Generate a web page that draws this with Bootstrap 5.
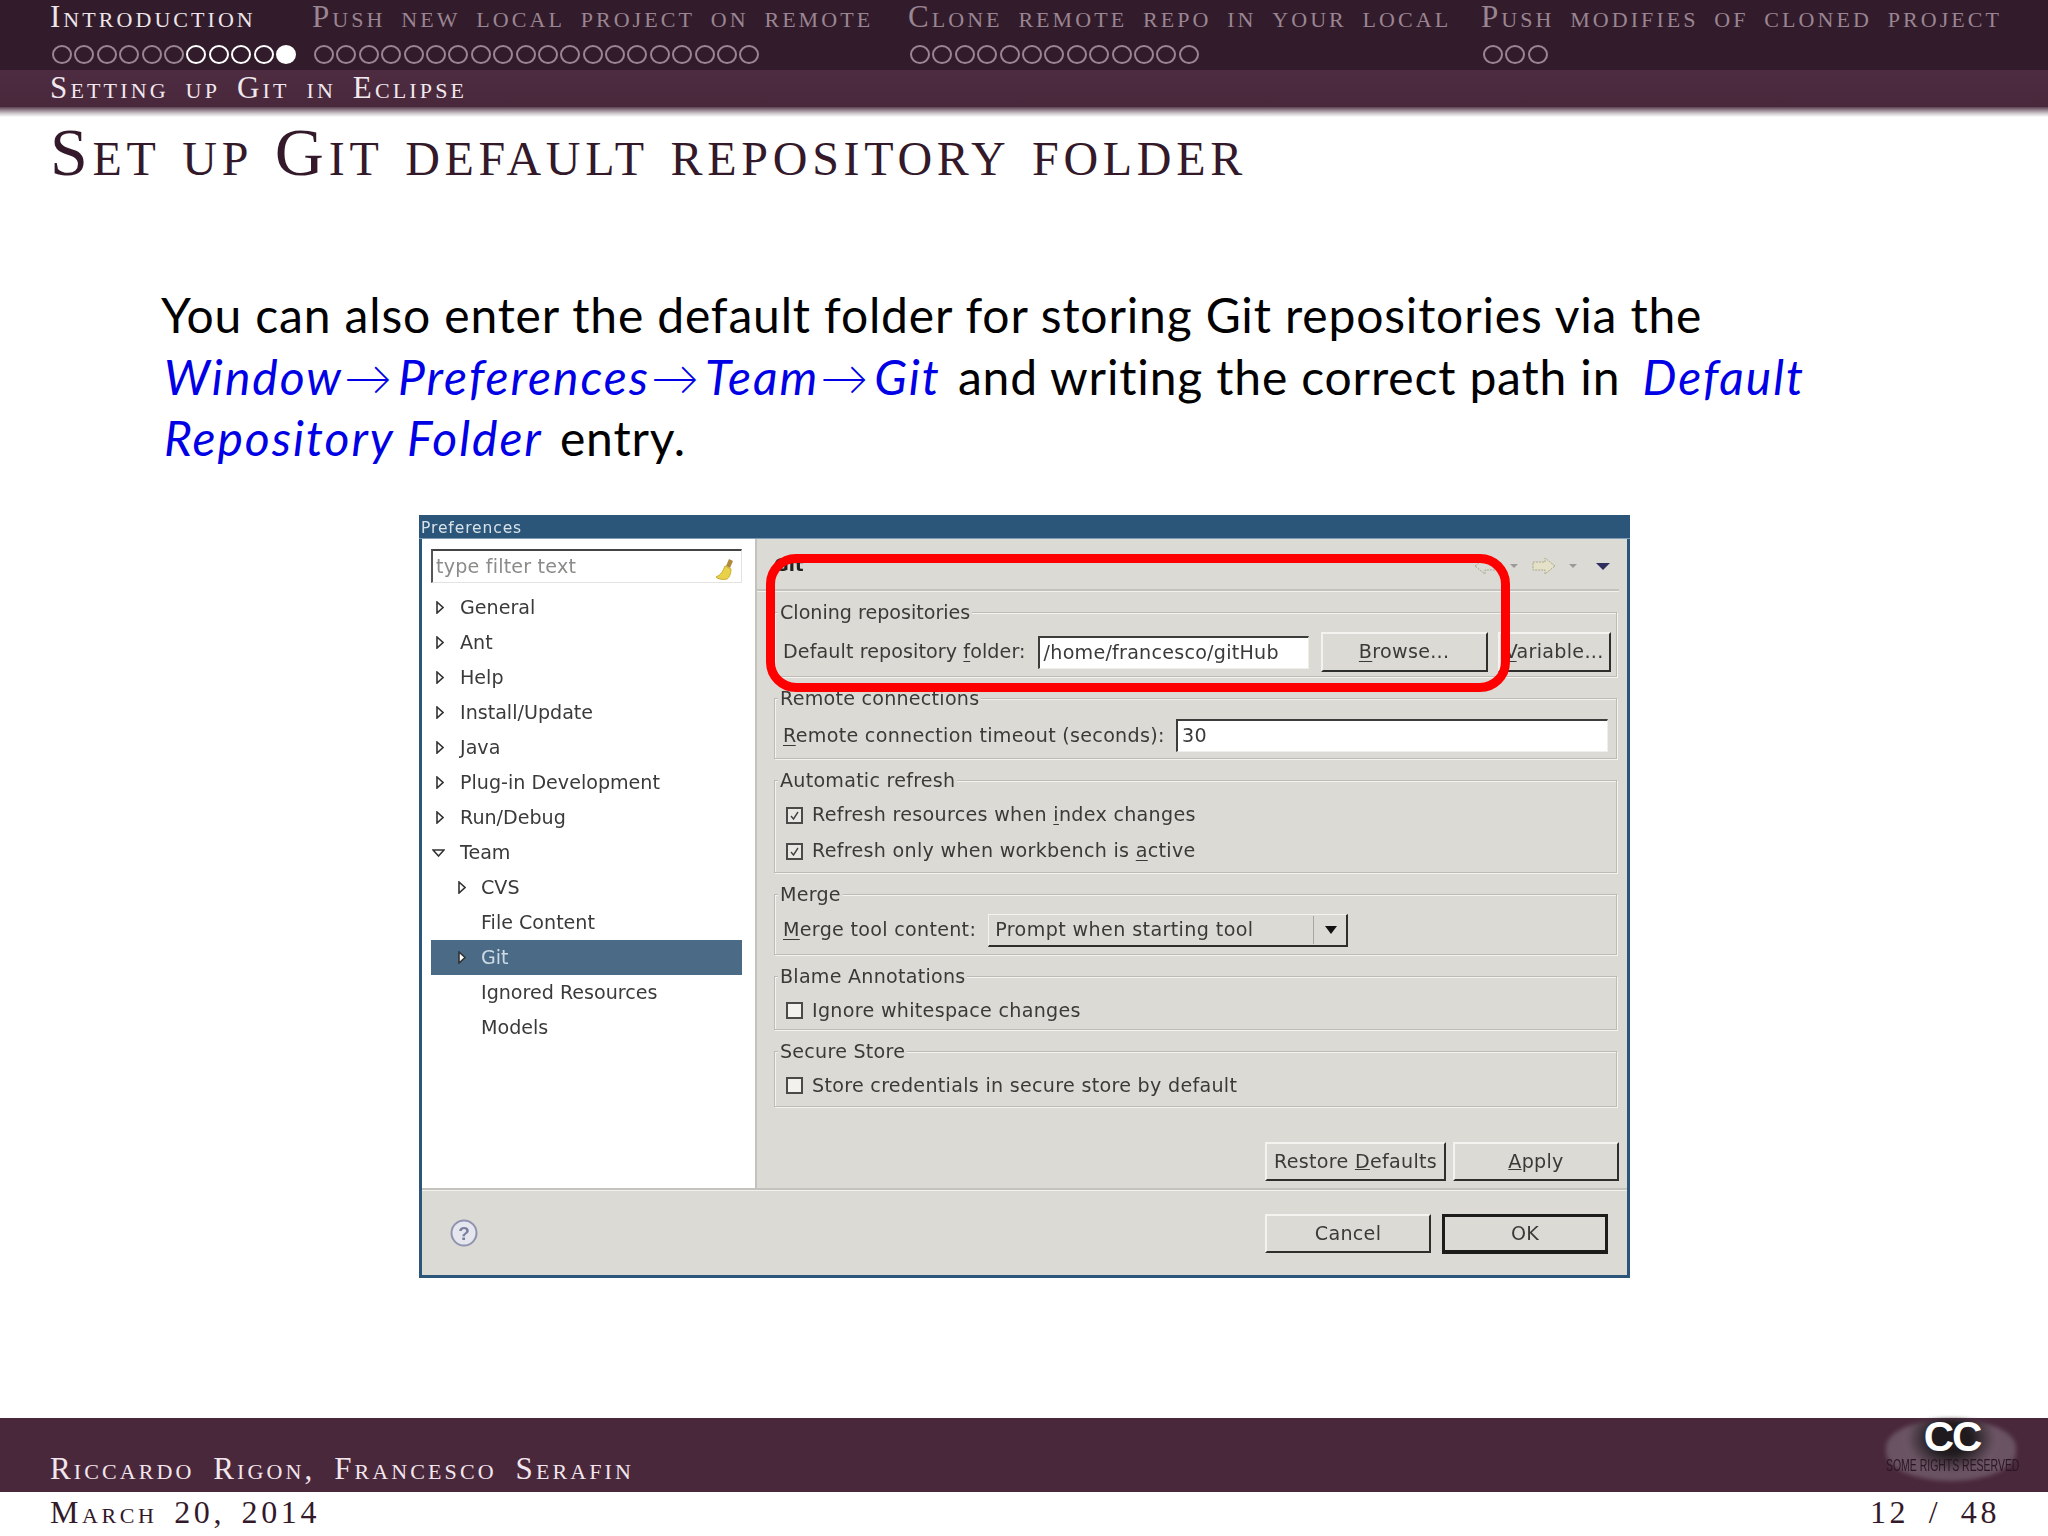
<!DOCTYPE html>
<html lang="en"><head><meta charset="utf-8"><title>Set up Git default repository folder</title>
<link rel="stylesheet" href="https://cdn.jsdelivr.net/npm/bootstrap@5.3.0/dist/css/bootstrap.min.css">
<style>
html,body{margin:0;background:#fff}
.slide{width:2048px;height:1536px;overflow:hidden;position:relative;font-family:"Liberation Serif",serif}
.topnav{height:70px;background:#321c2b;padding-left:50px;font-size:31px;font-variant:small-caps;color:#9a8592;line-height:1}
.navcol{padding-top:1px}
.c1{width:262px}.c2{width:596px}.c3{width:573px}.c4{width:519px}
.navlabel{white-space:nowrap;letter-spacing:3.05px;word-spacing:5px;height:44px}
.navlabel.on{color:#eee5ea}
.dots{margin-left:2px;gap:2.4px;height:20px}
.dt{width:20px;height:19px;border:2px solid #9a8592;border-radius:50%;flex:none}
.dt.w{border-color:#fff}.dt.f{border-color:#fff;background:#fff}
.secbar{height:37px;background:linear-gradient(#4d2b40,#4a283c);padding:1px 0 0 50px;font-size:31px;font-variant:small-caps;color:#f0e8ed;line-height:1.1;letter-spacing:3.15px;word-spacing:6px}
.shade{height:10px;background:linear-gradient(#5e4254,#cfc8cd 65%,#fff)}
.slidetitle{font-size:68px;font-variant:small-caps;font-weight:400;color:#33192a;margin:0 0 0 50px;line-height:1;padding-top:1px;letter-spacing:4.72px;white-space:nowrap}
.para{margin:98px 0 0 161px;width:1840px;font-family:Lato,"Liberation Sans",sans-serif;font-size:48px;line-height:61.5px;color:#000;letter-spacing:.84px;white-space:nowrap}
.para em{color:#0000e6;letter-spacing:2px;margin-left:3px}
.para em.ar{font-style:normal;font-weight:300;margin:0 1px}
.para em.tail{margin-right:4px}
.para em.dfl{margin-left:9px}
.dlg{width:1211px;height:763px;margin:46.5px 0 0 419px;background:#dcdad5;border:solid #2b5679;border-width:0 3px 3px 3px;color:#3a3a38;font-family:"DejaVu Sans",sans-serif;font-size:19.1px;line-height:1;filter:blur(.35px);flex:none}
.dlgtitle{height:24px;margin:0 -3px;background:#2b5679;color:#d8e2ea;font-size:15.5px;padding:6px 0 0 2px;letter-spacing:.9px;border-bottom:1px solid #7f9cb4}
.mainrow{height:651px;border-bottom:2px solid #c4c2bd;box-shadow:0 1px 0 #f2f1ee}
.treepane{width:335px;background:#fff;border-right:2px solid #c4c2bd;padding:10px 13px 0 9px;flex:none}
.filter{height:34px;border-top:2px solid #444;border-left:2px solid #555;border-right:1px solid #e4e3e0;border-bottom:1px solid #e4e3e0;color:#8b8b88;padding:6px 0 0 3px;margin-bottom:7px;letter-spacing:.2px}
.treelist{--bs-list-group-bg:transparent;--bs-list-group-border-width:0;--bs-list-group-item-padding-x:0;--bs-list-group-item-padding-y:0;--bs-list-group-color:#3a3a38;border-radius:0}
.treelist .list-group-item{height:35px;line-height:35px;display:flex;align-items:center;color:#3a3a38;padding-left:31px;white-space:nowrap;position:static}
.treelist .lv2{padding-left:50px}
.arw{width:8px;height:13px;margin:0 16px 0 -26px;flex:none}
.arw.dn{width:13px;height:8px;margin:0 15px 0 -30px}
.treelist .lv2 .arw{margin-left:-23px;margin-right:15px}
.treelist .list-group-item.sel{background:#4a6a85;color:#cddbe6}
.rightpane{padding:0 8px 0 0;position:relative;min-width:0;flex:1}
.prefhead{height:52px;border-bottom:2px solid #c4c2bd;box-shadow:0 1px 0 #f2f1ee;padding:17px 20px 0 17px;font-weight:700;font-size:18px}
.gitlbl{color:#222}
.grpstack{padding:21px 0 0 17px;gap:21px}
.grp{border:1px solid #bdbbb6;box-shadow:1px 1px 0 #f4f3f0 inset,1px 1px 0 #f4f3f0;padding:0 8px 0 8px;margin-right:2px;flex:none}
.glegend{display:table;background:#dcdad5;margin:-11px 0 0 -5px;padding:0 2px 0 2px;height:22px;line-height:22px;letter-spacing:.25px}
.h1g{height:65px;}.h2g{height:61px}.h3g{height:93px}.h4g{height:61px}.h5g{height:54px}.h6g{height:56px}
.h1g .glegend{letter-spacing:0}
.frow{display:flex;align-items:center;white-space:nowrap;letter-spacing:.3px}
.frow u{text-underline-offset:3px;text-decoration-thickness:1px}
.r1{margin-top:8px;height:40px;letter-spacing:.1px}.r2{height:33px;margin-top:9px}.r4{height:32px;margin-top:8px}
.txtin{border:solid;border-width:2px 1px 1px 2px;border-color:#3c3c3a #efeeeb #efeeeb #3c3c3a;background:#fff;height:33px;padding:4px 0 0 4px;color:#3a3a38;flex:none;line-height:1.2;letter-spacing:.25px}
.w1{width:271px;margin:0 12px 0 12px}.w2{width:432px;margin-left:auto}
.ebtn{--bs-btn-padding-x:0;--bs-btn-padding-y:0;--bs-btn-font-size:19.1px;--bs-btn-border-radius:0;--bs-btn-color:#3a3a38;--bs-btn-bg:#dcdad5;font-family:inherit;border:solid;border-width:2px;border-color:#f4f3f0 #2e2e2c #2e2e2c #f4f3f0;background:#dcdad5;color:#3a3a38;display:flex;align-items:center;justify-content:center;height:40px;flex:none;line-height:1;white-space:nowrap;letter-spacing:.3px}
.bb{width:167px;margin-right:10px}.bv{width:113px;overflow:hidden}
.ckrow{height:36px;padding-left:3px}
.ck1{margin-top:5px}.ck2{margin-top:4.5px}
.cbx{width:17px;height:17px;border:2px solid #4a4a48;background:#e9e8e4;margin-right:9px;flex:none;display:block}
.cbx.em{background:#f2f1ee}
.combo{width:360px;height:33px;margin-left:12px;border:1px solid;border-color:#f4f3f0 #2e2e2c #2e2e2c #f4f3f0;border-bottom-width:2px;border-right-width:2px;padding:0 0 0 6px;flex:none}
.combotxt{flex:1;letter-spacing:.4px}
.combosep{width:1px;height:28px;background:#a8a6a1;margin-right:11px}
.combotri{width:0;height:0;border:solid transparent;border-width:8px 6px 0 6px;border-top-color:#111;margin-right:9px}
.applyrow{gap:7px;padding-top:35px}
.b1{width:181px;height:39px}.b2{width:166px;height:39px}
.footbtns{height:85px;padding:24px 19px 0 0;gap:11px;align-items:flex-start}
.helpc{width:28px;height:28px;margin:5px auto 0 28px;flex:none}
.okb{border:3px solid #1c1c1a;box-shadow:0 1px 0 #1c1c1a}
.navicons{right:7px;top:16px;position:absolute}
.redbox{position:absolute;left:766px;top:554px;width:744px;height:138px;border:9px solid #ff0000;border-radius:30px;pointer-events:none;z-index:5}
.foot{position:absolute;left:0;right:0;top:1418px;height:74px;background:#4a283c;color:#f2e6ed;font-size:31px;font-variant:small-caps;padding:35px 0 0 50px;letter-spacing:3.1px;word-spacing:8px;line-height:1.05}
.under{position:absolute;left:50px;right:48px;top:1495px;color:#33192a;font-size:32px;line-height:1.1;display:flex;justify-content:space-between;letter-spacing:3.6px;word-spacing:5px;font-variant:small-caps}
.pgn{word-spacing:8px}
.cc{position:absolute;left:1886px;top:1px;width:130px;height:62px;border-radius:50%/46%;background:radial-gradient(ellipse 38% 60% at 50% 32%,#1e1a1d 0 40%,#6c5565 90%,#6a5363 100%);filter:blur(2px)}
.ccletters{position:absolute;left:1922px;top:1px;width:60px;text-align:center;font:700 42px/36px "Liberation Sans",sans-serif;letter-spacing:-2px;word-spacing:0;color:#fff;font-variant:normal}
.ccline{position:absolute;left:1886px;top:37px;width:134px;white-space:nowrap;font:400 17px/22px "Liberation Sans",sans-serif;color:#2a1522;transform:scaleX(.615);transform-origin:0 0;letter-spacing:0;word-spacing:0;font-variant:normal}
</style></head>
<body>
<svg width="0" height="0" class="d-block position-absolute"><defs>
<symbol id="tr" viewBox="0 0 8 13"><path d="M1 1 L7 6.5 L1 12 Z" fill="#fff" stroke="#333" stroke-width="1.6"/></symbol>
<symbol id="td" viewBox="0 0 13 8"><path d="M1 1 L12 1 L6.5 7 Z" fill="#fff" stroke="#333" stroke-width="1.6"/></symbol>
</defs></svg>
<div class="slide d-flex flex-column">
<div class="topnav d-flex">
<div class="navcol c1"><div class="navlabel on">Introduction</div><div class="dots d-flex"><i class="dt"></i><i class="dt"></i><i class="dt"></i><i class="dt"></i><i class="dt"></i><i class="dt"></i><i class="dt w"></i><i class="dt w"></i><i class="dt w"></i><i class="dt w"></i><i class="dt f"></i></div></div>
<div class="navcol c2"><div class="navlabel">Push new local project on remote</div><div class="dots d-flex"><i class="dt"></i><i class="dt"></i><i class="dt"></i><i class="dt"></i><i class="dt"></i><i class="dt"></i><i class="dt"></i><i class="dt"></i><i class="dt"></i><i class="dt"></i><i class="dt"></i><i class="dt"></i><i class="dt"></i><i class="dt"></i><i class="dt"></i><i class="dt"></i><i class="dt"></i><i class="dt"></i><i class="dt"></i><i class="dt"></i></div></div>
<div class="navcol c3"><div class="navlabel">Clone remote repo in your local</div><div class="dots d-flex"><i class="dt"></i><i class="dt"></i><i class="dt"></i><i class="dt"></i><i class="dt"></i><i class="dt"></i><i class="dt"></i><i class="dt"></i><i class="dt"></i><i class="dt"></i><i class="dt"></i><i class="dt"></i><i class="dt"></i></div></div>
<div class="navcol c4"><div class="navlabel">Push modifies of cloned project</div><div class="dots d-flex"><i class="dt"></i><i class="dt"></i><i class="dt"></i></div></div>
</div>
<div class="secbar">Setting up Git in Eclipse</div>
<div class="shade"></div>
<h1 class="slidetitle">Set up Git default repository folder</h1>
<p class="para mb-0">You can also enter the default folder for storing Git repositories via the<br><em>Window</em><em class="ar">→</em><em>Preferences</em><em class="ar">→</em><em>Team</em><em class="ar">→</em><em class="tail">Git</em> and writing the correct path in <em class="dfl">Default</em><br><em class="tail">Repository Folder</em> entry.</p>

<div class="dlg d-flex flex-column">
<div class="dlgtitle">Preferences</div>
<div class="mainrow d-flex">
<div class="treepane">
<div class="filter d-flex justify-content-between"><span>type filter text</span><svg width="24" height="24" viewBox="0 0 24 24" class="me-1"><path d="M16 2 L20 4 L17 11 L13 9 Z" fill="#b08a3c"/><path d="M12 9 L18 12 C18 17 16 21 14 22 C9 23 5 22 3 20 C8 18 10 14 12 9 Z" fill="#e8d24a" stroke="#c9ab2c"/></svg></div>
<div class="list-group treelist">
<div class="list-group-item"><svg class="arw"><use href="#tr"/></svg>General</div>
<div class="list-group-item"><svg class="arw"><use href="#tr"/></svg>Ant</div>
<div class="list-group-item"><svg class="arw"><use href="#tr"/></svg>Help</div>
<div class="list-group-item"><svg class="arw"><use href="#tr"/></svg>Install/Update</div>
<div class="list-group-item"><svg class="arw"><use href="#tr"/></svg>Java</div>
<div class="list-group-item"><svg class="arw"><use href="#tr"/></svg>Plug-in Development</div>
<div class="list-group-item"><svg class="arw"><use href="#tr"/></svg>Run/Debug</div>
<div class="list-group-item"><svg class="arw dn"><use href="#td"/></svg>Team</div>
<div class="list-group-item lv2"><svg class="arw"><use href="#tr"/></svg>CVS</div>
<div class="list-group-item lv2">File Content</div>
<div class="list-group-item lv2 sel"><svg class="arw"><use href="#tr"/></svg>Git</div>
<div class="list-group-item lv2">Ignored Resources</div>
<div class="list-group-item lv2">Models</div>
</div>
</div>
<div class="rightpane d-flex flex-column">
<div class="prefhead position-relative"><span class="gitlbl">Git</span>
<svg class="navicons d-block" width="145" height="22" viewBox="0 0 145 22"><path d="M8 11 L18 3 L18 7 L30 7 L30 15 L18 15 L18 19 Z" fill="#dcdad5" stroke="#a9a68c" stroke-dasharray="2 1"/><path d="M43 9 L51 9 L47 13 Z" fill="#9a9a9a"/><path d="M88 11 L78 3 L78 7 L66 7 L66 15 L78 15 L78 19 Z" fill="#e4e1c8" stroke="#a9a68c" stroke-dasharray="2 1"/><path d="M102 9 L110 9 L106 13 Z" fill="#9a9a9a"/><path d="M129 8 L143 8 L136 15 Z" fill="#2e2f5e"/></svg>
</div>
<div class="grpstack d-flex flex-column">
<div class="grp h1g"><div class="glegend">Cloning repositories</div><div class="frow r1"><span>Default repository <u>f</u>older:</span><span class="txtin w1">/home/francesco/gitHub</span><button type="button" class="btn ebtn bb"><span><u>B</u>rowse...</span></button><button type="button" class="btn ebtn bv"><span><u>V</u>ariable...</span></button></div></div>
<div class="grp h2g"><div class="glegend">Remote connections</div><div class="frow r2"><span><u>R</u>emote connection timeout (seconds):</span><span class="txtin w2">30</span></div></div>
<div class="grp h3g"><div class="glegend">Automatic refresh</div>
<div class="frow ckrow ck1"><svg class="cbx" viewBox="0 0 13 13"><path d="M3 7 L5.5 10 L10 3" fill="none" stroke="#444" stroke-width="1.4"/></svg><span>Refresh resources when <u>i</u>ndex changes</span></div>
<div class="frow ckrow"><svg class="cbx" viewBox="0 0 13 13"><path d="M3 7 L5.5 10 L10 3" fill="none" stroke="#444" stroke-width="1.4"/></svg><span>Refresh only when workbench is <u>a</u>ctive</span></div></div>
<div class="grp h4g"><div class="glegend">Merge</div><div class="frow r4"><span><u>M</u>erge tool content:</span><div class="combo d-flex align-items-center"><span class="combotxt">Prompt when starting tool</span><i class="combosep"></i><i class="combotri"></i></div></div></div>
<div class="grp h5g"><div class="glegend">Blame Annotations</div><div class="frow ckrow ck2"><i class="cbx em"></i><span>Ignore whitespace changes</span></div></div>
<div class="grp h6g"><div class="glegend">Secure Store</div><div class="frow ckrow ck2"><i class="cbx em"></i><span>Store credentials in secure store by default</span></div></div>
</div>
<div class="applyrow d-flex justify-content-end"><button type="button" class="btn ebtn b1"><span>Restore <u>D</u>efaults</span></button><button type="button" class="btn ebtn b2"><span><u>A</u>pply</span></button></div>
</div>
</div>
<div class="footbtns d-flex">
<svg class="helpc" viewBox="0 0 28 28"><circle cx="14" cy="14" r="12.5" fill="#e6e6ee" stroke="#8f93b0" stroke-width="2"/><text x="14" y="20.5" text-anchor="middle" font-family="Liberation Sans" font-weight="700" font-size="19" fill="#7a7f9f">?</text></svg>
<button type="button" class="btn ebtn b2">Cancel</button><button type="button" class="btn ebtn b2 okb">OK</button>
</div>
</div>

<div class="redbox"></div>
<div class="foot">Riccardo Rigon, Francesco Serafin
<div class="cc"></div><div class="ccletters">CC</div><div class="ccline">SOME RIGHTS RESERVED</div>
</div>
<div class="under"><span>March 20, 2014</span><span class="pgn">12 / 48</span></div>
</div>
</body></html>
